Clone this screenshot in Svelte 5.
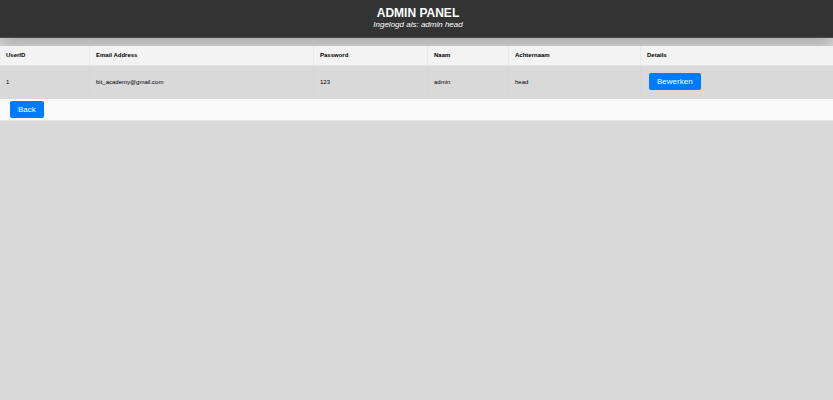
<script>
  const columns = [
    { label: 'UserID', share: 90 },
    { label: 'Email Address', share: 224 },
    { label: 'Password', share: 114 },
    { label: 'Naam', share: 81 },
    { label: 'Achternaam', share: 132 },
    { label: 'Details', share: 192 }
  ];
  const total = columns.reduce((sum, c) => sum + c.share, 0);
  const users = [
    { id: 1, email: 'bit_academy@gmail.com', password: '123', first: 'admin', last: 'head' }
  ];
</script>

<header>
  <h1>ADMIN PANEL</h1>
  <p>Ingelogd als: admin head</p>
</header>

<main>
  <table>
    <colgroup>
      {#each columns as column}
        <col style="width: {(column.share / total) * 100}%" />
      {/each}
    </colgroup>
    <thead>
      <tr>
        {#each columns as column}
          <th scope="col">{column.label}</th>
        {/each}
      </tr>
    </thead>
    <tbody>
      {#each users as user}
        <tr>
          <td>{user.id}</td>
          <td>{user.email}</td>
          <td>{user.password}</td>
          <td>{user.first}</td>
          <td>{user.last}</td>
          <td><button type="button">Bewerken</button></td>
        </tr>
      {/each}
    </tbody>
  </table>
  <div class="actions">
    <button type="button">Back</button>
  </div>
</main>

<style>
  :global(body) {
    margin: 0;
    background: #d9d9d9;
    color: #000;
    font-family: "Liberation Sans", Arial, sans-serif;
    font-size: 6px;
  }

  header {
    padding: 6px 0 7px 3px;
    border-bottom: 1px solid #4a4a4a;
    background: #333;
    color: #fff;
    text-align: center;
    box-shadow: 0 8px 16px rgba(0, 0, 0, 0.2);
  }

  h1 {
    margin: 0;
    font-size: 12px;
    line-height: 14px;
  }

  p {
    margin: 0;
    font-size: 8px;
    line-height: 10px;
    font-style: italic;
  }

  main {
    position: relative;
    margin-top: 8px;
  }

  table {
    width: 100%;
    table-layout: fixed;
    border-collapse: separate;
    border-spacing: 0;
    background: #d9d9d9;
  }

  th,
  td {
    box-sizing: border-box;
    padding: 0 6px 2px;
    border-right: 1px solid #d6d6d6;
    text-align: left;
    vertical-align: middle;
  }

  th {
    height: 20px;
    border-right-color: #e9e9e9;
    border-bottom: 1px solid #e2e2e2;
    background: #f3f3f3;
  }

  td {
    height: 33px;
  }

  th:last-child,
  td:last-child {
    border-right: 0;
  }

  button {
    display: block;
    height: 17px;
    margin: 0 2px;
    padding: 0 8px;
    border: 0;
    border-radius: 2px;
    background: #007bff;
    color: #fff;
    font-family: inherit;
    font-size: 8px;
    line-height: 17px;
    cursor: pointer;
  }

  .actions {
    padding: 2px 8px;
    border-bottom: 1px solid #e6e6e6;
    background: #fafafa;
  }
</style>
